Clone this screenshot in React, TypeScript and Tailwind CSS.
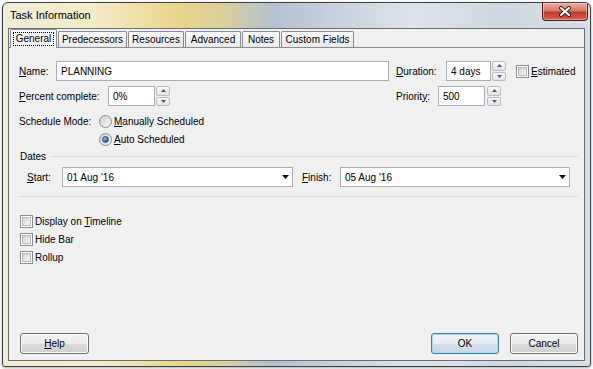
import React from "react";

const U = ({ children }: { children: React.ReactNode }) => (
  <span className="underline underline-offset-1">{children}</span>
);

function TextBox({ value, className }: { value: string; className: string }) {
  return (
    <div className={"h-[20px] bg-white border border-[#abadb3] flex items-center pl-[4px] " + className}>
      {value}
    </div>
  );
}

function Combo({ value, className }: { value: string; className: string }) {
  return (
    <div className={"h-[20px] bg-white border border-[#abadb3] flex items-center justify-between pl-[4px] pr-[3px] " + className}>
      <span>{value}</span>
      <svg width="7" height="4" viewBox="0 0 7 4">
        <path d="M0 0H7L3.5 4Z" fill="#111" />
      </svg>
    </div>
  );
}

function Spinner({ className = "" }: { className?: string }) {
  return (
    <div className={"flex flex-col w-[14px] h-[20px] gap-[1px] " + className}>
      <div className="flex-1 border border-[#b9bdc3] rounded-[2px] bg-[linear-gradient(#f9f9f9,#e3e3e3)] flex items-center justify-center">
        <svg width="5" height="3" viewBox="0 0 5 3">
          <path d="M0 3L2.5 0L5 3Z" fill="#4a5a78" />
        </svg>
      </div>
      <div className="flex-1 border border-[#b9bdc3] rounded-[2px] bg-[linear-gradient(#f9f9f9,#e3e3e3)] flex items-center justify-center">
        <svg width="5" height="3" viewBox="0 0 5 3">
          <path d="M0 0L5 0L2.5 3Z" fill="#4a5a78" />
        </svg>
      </div>
    </div>
  );
}

function CheckBox({ className = "" }: { className?: string }) {
  return (
    <div className={"w-[13px] h-[13px] border border-[#8e8f8f] bg-white p-[1px] " + className}>
      <div className="w-full h-full border border-[#b9b9b9] bg-[linear-gradient(135deg,#d2d2d2,#f7f7f7)]" />
    </div>
  );
}

function Radio({ checked }: { checked?: boolean }) {
  return (
    <div className="w-[13px] h-[13px] rounded-full border border-[#8a8c8f] bg-[linear-gradient(135deg,#cfcfcf,#fafafa)] flex items-center justify-center">
      {checked && (
        <div className="w-[7px] h-[7px] rounded-full border border-[#2b5a87] bg-[radial-gradient(circle_at_40%_35%,#9bcaf0,#1d4d80_75%)]" />
      )}
    </div>
  );
}

function Btn({ children, def, className }: { children: React.ReactNode; def?: boolean; className: string }) {
  return (
    <div
      className={
        "h-[21px] rounded-[3px] border flex items-center justify-center " +
        (def
          ? "border-[#3c7fb1] bg-[linear-gradient(#eef5fa_0%,#e3ecf3_50%,#d5e1eb_50%,#cbd8e4_100%)] shadow-[inset_0_0_0_1px_#a8d8f5]"
          : "border-[#707070] bg-[linear-gradient(#f2f2f2_0%,#ebebeb_50%,#dddddd_50%,#cfcfcf_100%)] shadow-[inset_0_0_0_1px_#fbfbfb]") +
        " " +
        className
      }
    >
      {children}
    </div>
  );
}

function CloseButton() {
  return (
    <div className="mr-[2px] w-[46px] h-[18px] rounded-b-[4px] border border-t-0 border-[#5a1b14] bg-[linear-gradient(#eab1a2_0%,#d9786a_45%,#c23a2a_55%,#d2614f_100%)] shadow-[inset_0_0_0_1px_rgba(255,220,210,0.5)] flex items-center justify-center">
      <svg width="14" height="11" viewBox="0 0 14 11">
        <path d="M3 2L11 9M11 2L3 9" stroke="#3a1410" strokeWidth="4" strokeLinecap="round" />
        <path d="M3 2L11 9M11 2L3 9" stroke="#ffffff" strokeWidth="2.2" strokeLinecap="round" />
      </svg>
    </div>
  );
}

const tabs = [
  { label: "Predecessors", w: "w-[69px]" },
  { label: "Resources", w: "w-[56px]" },
  { label: "Advanced", w: "w-[56px]" },
  { label: "Notes", w: "w-[38px]" },
  { label: "Custom Fields", w: "w-[73px]" },
];

export default function App() {
  return (
    <div className="w-[593px] h-[369px] bg-white pl-[2px] pt-[2px] font-['Liberation_Sans',Arial,sans-serif] text-[10px] text-black">
      <div className="w-[589px] h-[365px] flex flex-col border border-[#3e4146] rounded-t-[6px] rounded-b-[3px] overflow-hidden shadow-[0_1px_3px_rgba(0,0,0,0.35)] bg-[linear-gradient(90deg,#f1ecd6_0%,#f4ebc6_16%,#e8d68a_30%,#d9cf9e_38%,#b3c0cf_46%,#c6d1dd_56%,#dde3ea_70%,#cfd8e2_85%,#d8dee5_100%)]">
        {/* title bar */}
        <div className="h-[25px] shrink-0 flex items-start justify-between">
          <div className="h-full pl-[7px] flex items-center text-[11px]">Task Information</div>
          <CloseButton />
        </div>

        <div className="flex-1 flex px-[5px] pb-[5px]">
          <div className="flex-1 flex flex-col border border-[#6b6f75] bg-[#f0f0f0]">
            {/* tabs */}
            <div className="h-[18px] shrink-0 flex items-end pl-[1px]">
              <div className="relative z-10 -mb-px h-[19px] w-[47px] border border-b-0 border-[#898c95] rounded-t-[2px] bg-[linear-gradient(#fdfdfd,#f0f0f0)] flex items-center justify-center">
                <span className="w-[41px] text-center border border-dotted border-black leading-[12px]">General</span>
              </div>
              {tabs.map((t) => (
                <div
                  key={t.label}
                  className={"ml-[1px] h-[16px] border border-b-0 border-[#898c95] rounded-t-[2px] bg-[linear-gradient(#fbfbfb,#e9e9e9)] flex items-center justify-center " + t.w}
                >
                  {t.label}
                </div>
              ))}
            </div>

            {/* tab page */}
            <div className="flex-1 flex flex-col border-t border-[#898c95] pl-[10px] pr-[6px] pb-[6px]">
              <div className="mt-[13px] h-[20px] flex items-center">
                <div className="w-[377px] flex items-center">
                  <span className="w-[37px]">
                    <U>N</U>ame:
                  </span>
                  <TextBox value="PLANNING" className="w-[333px]" />
                </div>
                <span className="w-[50px]">
                  <U>D</U>uration:
                </span>
                <TextBox value="4 days" className="w-[45px]" />
                <Spinner className="ml-[1px]" />
                <CheckBox className="ml-[10px]" />
                <span className="ml-[2px]">
                  <U>E</U>stimated
                </span>
              </div>

              <div className="mt-[5px] h-[20px] flex items-center">
                <div className="w-[377px] flex items-center">
                  <span className="w-[89px]">
                    <U>P</U>ercent complete:
                  </span>
                  <TextBox value="0%" className="w-[47px]" />
                  <Spinner className="ml-[1px]" />
                </div>
                <span className="w-[42px]">
                  Priorit<U>y</U>:
                </span>
                <TextBox value="500" className="w-[47px]" />
                <Spinner className="ml-[2px]" />
              </div>

              <div className="mt-[6px] h-[18px] flex items-center">
                <span className="w-[80px]">Schedule Mode:</span>
                <Radio />
                <span className="ml-[2px]">
                  <U>M</U>anually Scheduled
                </span>
              </div>
              <div className="h-[18px] flex items-center pl-[80px]">
                <Radio checked />
                <span className="ml-[2px]">
                  <U>A</U>uto Scheduled
                </span>
              </div>

              <div className="mt-[1px] h-[14px] flex items-center">
                <span className="ml-[1px]">Dates</span>
                <div className="flex-1 h-px ml-[5px] bg-[#d5dfe5]" />
              </div>

              <div className="mt-[4px] h-[20px] flex items-center pl-[8px]">
                <span className="w-[35px]">
                  <U>S</U>tart:
                </span>
                <Combo value="01 Aug '16" className="w-[231px]" />
                <span className="ml-[9px] w-[38px]">
                  <U>F</U>inish:
                </span>
                <Combo value="05 Aug '16" className="w-[230px]" />
              </div>

              <div className="mt-[9px] h-px bg-[#d5dfe5]" />

              <div className="mt-[15px] flex flex-col pl-[1px]">
                <div className="h-[18px] flex items-center">
                  <CheckBox />
                  <span className="ml-[2px]">
                    Display on <U>T</U>imeline
                  </span>
                </div>
                <div className="h-[18px] flex items-center">
                  <CheckBox />
                  <span className="ml-[2px]">Hide Bar</span>
                </div>
                <div className="h-[18px] flex items-center">
                  <CheckBox />
                  <span className="ml-[2px]">Rollup</span>
                </div>
              </div>

              <div className="mt-auto flex items-center">
                <Btn className="ml-[1px] w-[69px]">
                  <span>
                    <U>H</U>elp
                  </span>
                </Btn>
                <Btn def className="ml-auto w-[68px]">
                  OK
                </Btn>
                <Btn className="ml-[11px] w-[68px]">Cancel</Btn>
              </div>
            </div>
          </div>
        </div>
      </div>
    </div>
  );
}
